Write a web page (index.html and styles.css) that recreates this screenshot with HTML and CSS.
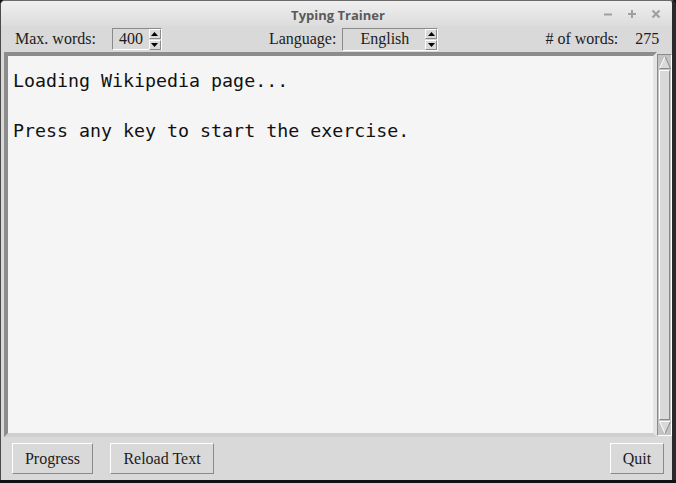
FILE: index.html
```html
<!DOCTYPE html>
<html>
<head>
<meta charset="utf-8">
<link rel="stylesheet" href="styles.css">
</head>
<body>
<div class="window">
  <div class="titlebar">
    <span class="title">Typing Trainer</span>
    <div class="controls">
      <span class="ctl"><svg width="10" height="10" viewBox="0 0 10 10"><path d="M1 5.5H9" stroke="#a0a0a0" stroke-width="2"/></svg></span>
      <span class="ctl"><svg width="10" height="10" viewBox="0 0 10 10"><path d="M1 5H9M5 1V9" stroke="#a0a0a0" stroke-width="2"/></svg></span>
      <span class="ctl"><svg width="10" height="10" viewBox="0 0 10 10"><path d="M1.5 1.5L8.5 8.5M8.5 1.5L1.5 8.5" stroke="#a0a0a0" stroke-width="2.2"/></svg></span>
    </div>
  </div>
  <div class="toolbar">
    <span class="label l-max">Max. words:</span>
    <div class="spin">
      <span class="spin-val">400</span>
      <div class="arrows">
        <span class="arr"><svg width="7" height="4" viewBox="0 0 7 4"><path d="M0 4L3.5 0L7 4Z" fill="#000"/></svg></span>
        <span class="arr"><svg width="7" height="4" viewBox="0 0 7 4"><path d="M0 0L3.5 4L7 0Z" fill="#000"/></svg></span>
      </div>
    </div>
    <span class="label l-lang">Language:</span>
    <div class="spin combo">
      <span class="combo-val">English</span>
      <div class="arrows">
        <span class="arr"><svg width="7" height="4" viewBox="0 0 7 4"><path d="M0 4L3.5 0L7 4Z" fill="#000"/></svg></span>
        <span class="arr"><svg width="7" height="4" viewBox="0 0 7 4"><path d="M0 0L3.5 4L7 0Z" fill="#000"/></svg></span>
      </div>
    </div>
    <span class="label l-count">#&nbsp;of words:</span>
    <span class="label l-num">275</span>
  </div>
  <div class="main">
    <div class="textbox">
      <div class="line">Loading Wikipedia page...</div>
      <div class="line">&nbsp;</div>
      <div class="line">Press any key to start the exercise.</div>
    </div>
    <div class="scrollbar">
      <span class="sarrow"><svg width="12" height="13" viewBox="0 0 12 13"><path d="M6 0.5L11.5 12.5H0.5Z" fill="#d9d9d9"/><path d="M0.5 12.5L6 0.5" stroke="#fff" fill="none"/><path d="M6 0.5L11.5 12.5H0.5" stroke="#8a8a8a" fill="none"/></svg></span>
      <span class="thumb"></span>
      <span class="sarrow"><svg width="12" height="13" viewBox="0 0 12 13"><path d="M0.5 0.5H11.5L6 12.5Z" fill="#d9d9d9"/><path d="M0.5 0.5H11.5" stroke="#fff" fill="none"/><path d="M0.5 0.5L6 12.5" stroke="#fff" fill="none"/><path d="M6 12.5L11.5 0.5" stroke="#8a8a8a" fill="none"/></svg></span>
    </div>
  </div>
  <div class="bottombar">
    <button class="btn b-progress">Progress</button>
    <button class="btn b-reload">Reload Text</button>
    <span class="spacer"></span>
    <button class="btn b-quit">Quit</button>
  </div>
</div>
</body>
</html>
```
FILE: styles.css
```css
html, body {
  margin: 0;
  padding: 0;
  background: #111;
  width: 676px;
  height: 483px;
  overflow: hidden;
}
.window {
  box-sizing: border-box;
  width: 676px;
  height: 480px;
  background: #d9d9d9;
  border-left: 1px solid #4a4a4a;
  border-right: 4px solid #2a2a2a;
  border-top: 1px solid #6a6a6a;
  border-radius: 5px 5px 0 0;
  display: flex;
  flex-direction: column;
  font-family: "Liberation Serif", serif;
  color: #1c1c1c;
}
.titlebar {
  height: 25px;
  flex: none;
  position: relative;
  background: linear-gradient(#efefef, #dcdcdc);
  border-radius: 4px 4px 0 0;
  display: flex;
  align-items: center;
  justify-content: center;
}
.title {
  font-family: "Open Sans", "DejaVu Sans", sans-serif;
  font-weight: bold;
  font-size: 13px;
  color: #5a5a5a;
  margin-left: 3px;
  margin-top: 2px;
}
.controls {
  position: absolute;
  right: 11px;
  top: 8px;
  display: flex;
  gap: 14px;
}
.ctl { width: 10px; height: 10px; display: block; }
.ctl svg { display: block; }
.toolbar {
  height: 26px;
  flex: none;
  display: flex;
  align-items: center;
  font-size: 16px;
}
.label { white-space: nowrap; }
.l-max { margin-left: 14px; }
.spin {
  box-sizing: border-box;
  margin-left: 16px;
  width: 50px;
  height: 22px;
  border-top: 1px solid #8a8a8a;
  border-left: 1px solid #8a8a8a;
  border-bottom: 1px solid #fff;
  border-right: 1px solid #fff;
  display: flex;
  align-items: center;
}
.spin-val { flex: 1; text-align: right; padding-right: 6px; }
.arrows {
  display: flex;
  flex-direction: column;
  gap: 1px;
}
.arr {
  box-sizing: border-box;
  width: 12px;
  height: 10px;
  border-top: 1px solid #fff;
  border-left: 1px solid #fff;
  border-bottom: 1px solid #8a8a8a;
  border-right: 1px solid #8a8a8a;
  display: flex;
  align-items: center;
  justify-content: center;
}
.l-lang { margin-left: 107px; }
.combo {
  margin-left: 6px;
  width: 96px;
  height: 23px;
}
.combo-val { flex: 1; padding-left: 17px; }
.l-count { margin-left: 107px; }
.l-num { margin-left: 17px; }
.main {
  flex: 1;
  display: flex;
  padding-left: 3px;
  min-height: 0;
}
.textbox {
  box-sizing: border-box;
  flex: none;
  width: 653px;
  height: 100%;
  background: #f5f5f5;
  border-top: 4px solid #8c8c8c;
  border-left: 4px solid #8c8c8c;
  border-bottom: 4px solid #cfcfcf;
  border-right: 4px solid #e4e4e4;
  padding: 12px 5px 0 5px;
  font-family: "DejaVu Sans Mono", monospace;
  font-size: 18.3px;
  line-height: 25px;
  color: #111;
}
.scrollbar {
  box-sizing: border-box;
  width: 15px;
  margin-top: 2px;
  margin-bottom: 1px;
  background: #c3c3c3;
  border-top: 1px solid #8a8a8a;
  border-left: 1px solid #8a8a8a;
  border-right: 1px solid #fff;
  border-bottom: 1px solid #fff;
  display: flex;
  flex-direction: column;
  padding: 1px;
}
.sarrow { flex: none; height: 13px; display: block; }
.sarrow svg { display: block; }
.thumb {
  flex: 1;
  box-sizing: border-box;
  margin: 1px 0;
  background: #d9d9d9;
  border-top: 1px solid #fff;
  border-left: 1px solid #fff;
  border-bottom: 1px solid #8a8a8a;
  border-right: 1px solid #8a8a8a;
}
.bottombar {
  height: 43px;
  flex: none;
  display: flex;
  align-items: flex-start;
  padding: 6px 8px 0 11px;
  box-sizing: border-box;
}
.btn {
  box-sizing: border-box;
  height: 31px;
  background: #d9d9d9;
  font-family: "Liberation Serif", serif;
  font-size: 16px;
  color: #1c1c1c;
  border-top: 1px solid #fff;
  border-left: 1px solid #fff;
  border-bottom: 1px solid #8a8a8a;
  border-right: 1px solid #8a8a8a;
  padding: 0;
  margin: 0;
}
.b-progress { width: 81px; }
.b-reload { width: 104px; margin-left: 17px; }
.spacer { flex: 1; }
.b-quit { width: 54px; }
```
